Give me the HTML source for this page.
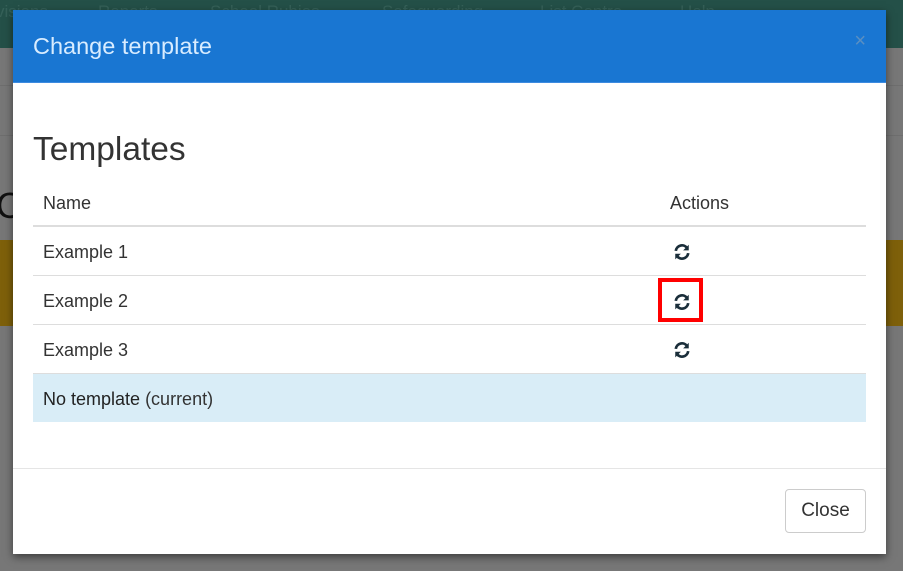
<!DOCTYPE html>
<html><head><meta charset="utf-8"><style>
html,body{margin:0;width:903px;height:571px;overflow:hidden;background:#eee}
body{font-family:"Liberation Sans",sans-serif;position:relative}
.nav{position:absolute;left:0;top:0;width:903px;height:48px;background:#48a090;color:#6ac0b0;font-size:17px}
.nav span{position:absolute;top:2px}
.band{position:absolute;left:0;top:240px;width:903px;height:86px;background:#fcc014}
.ln{position:absolute;left:0;width:903px;height:1px;background:#ddd}
.backdrop{position:absolute;left:0;top:0;width:903px;height:571px;background:rgba(0,0,0,.5)}
.modal{position:absolute;left:13px;top:10px;width:873px;height:544px;background:#fff;box-shadow:0 3px 8px rgba(0,0,0,.5)}
.hd{height:72px;background:#1976d2;border-bottom:1px solid #3d8be0;position:relative}
.hd .t{position:absolute;left:20px;top:23px;color:#d8ecff;font-size:23.5px}
.hd .x{position:absolute;right:20px;top:20px;color:#5a8fc2;font-size:20px}
h2{position:absolute;left:20px;top:121px;margin:0;font-weight:normal;font-size:33.5px;color:#333}
.row{position:absolute;left:20px;width:833px;height:48px;border-top:1px solid #ddd;font-size:18px;color:#333}
.row .n{position:absolute;left:10px;top:15px}
.ic{position:absolute;left:640px;top:16px}
.ft{position:absolute;left:0;top:458px;width:873px;border-top:1px solid #e5e5e5}
.btn{position:absolute;left:772px;top:479px;width:81px;height:44px;border:1px solid #ccc;border-radius:4px;box-sizing:border-box;font-size:19px;color:#333;text-align:center;line-height:42px}
</style></head><body>
<div class="nav"><span style="left:-4px">visions</span><span style="left:98px">Reports</span><span style="left:210px">School Rubies</span><span style="left:382px">Safeguarding</span><span style="left:540px">List Centre</span><span style="left:680px">Help</span></div>
<div class="ln" style="top:85px"></div><div class="ln" style="top:135px"></div>
<div style="position:absolute;left:-4px;top:185px;font-size:36px;color:#222">C</div>
<div class="band"></div>
<div class="backdrop"></div>
<div class="modal">
<div class="hd"><div class="t">Change template</div><div class="x">×</div></div>
<h2>Templates</h2>
<div class="row" style="top:168px;border-top:none"><span class="n" style="top:15px">Name</span><span style="position:absolute;left:637px;top:15px">Actions</span></div>
<div class="row" style="top:215px;border-top:2px solid #ddd"><span class="n">Example 1</span><svg class="ic" width="18" height="18" viewBox="0 0 16 16"><path d="M2.5 7A5.5 5.5 0 0 1 12.5 4.5M13.5 9A5.5 5.5 0 0 1 3.5 11.5" stroke="#1a2e3a" stroke-width="2.4" fill="none"/><path d="M14 1.5v5h-5zM2 14.5v-5h5z" fill="#1a2e3a"/></svg></div>
<div class="row" style="top:265px"><span class="n">Example 2</span><svg class="ic" width="18" height="18" viewBox="0 0 16 16" style="top:17px"><path d="M2.5 7A5.5 5.5 0 0 1 12.5 4.5M13.5 9A5.5 5.5 0 0 1 3.5 11.5" stroke="#1a2e3a" stroke-width="2.4" fill="none"/><path d="M14 1.5v5h-5zM2 14.5v-5h5z" fill="#1a2e3a"/></svg><div style="position:absolute;left:625px;top:2px;width:45px;height:44px;border:4px solid #f00;box-sizing:border-box"></div></div>
<div class="row" style="top:314px"><span class="n">Example 3</span><svg class="ic" width="18" height="18" viewBox="0 0 16 16"><path d="M2.5 7A5.5 5.5 0 0 1 12.5 4.5M13.5 9A5.5 5.5 0 0 1 3.5 11.5" stroke="#1a2e3a" stroke-width="2.4" fill="none"/><path d="M14 1.5v5h-5zM2 14.5v-5h5z" fill="#1a2e3a"/></svg></div>
<div class="row" style="top:363px;background:#d9edf7;height:48px"><span class="n"><span style="color:#222">No template</span> (current)</span></div>
<div class="ft"></div>
<div class="btn">Close</div>
</div>
</body></html>
